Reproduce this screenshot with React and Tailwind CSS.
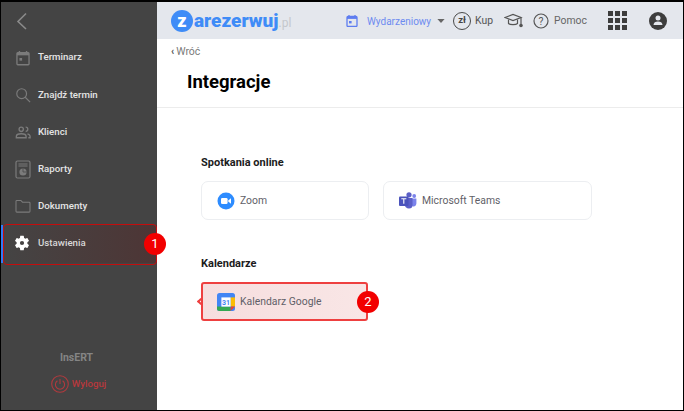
import { Fragment } from 'react';

const menu = [
  { label: 'Terminarz', icon: 'calendar' },
  { label: 'Znajdź termin', icon: 'search' },
  { label: 'Klienci', icon: 'people' },
  { label: 'Raporty', icon: 'report' },
  { label: 'Dokumenty', icon: 'folder' },
];

function MenuIcon({ name }) {
  if (name === 'calendar') {
    return (
      <svg width="16" height="16" viewBox="0 0 18 18" fill="none">
        <path d="M5 1v3M13 1v3" stroke="#7b7b7b" strokeWidth="1.6" />
        <rect x="2.2" y="3" width="13.6" height="13.6" rx="1" stroke="#7b7b7b" strokeWidth="1.5" />
        <rect x="2.2" y="3" width="13.6" height="3" fill="#7b7b7b" />
        <rect x="5" y="9" width="3" height="3" fill="#7b7b7b" />
      </svg>
    );
  }
  if (name === 'search') {
    return (
      <svg width="16" height="16" viewBox="0 0 18 18" fill="none" stroke="#7b7b7b" strokeWidth="1.3">
        <circle cx="7.5" cy="7.5" r="5.5" />
        <path d="M11.5 11.5l5.5 5.5" />
      </svg>
    );
  }
  if (name === 'people') {
    return (
      <svg width="16" height="16" viewBox="0 0 18 18" fill="none" stroke="#7b7b7b" strokeWidth="1.5">
        <circle cx="7" cy="6" r="2.4" />
        <path d="M12 3.6a2.4 2.4 0 0 1 0 4.8" />
        <path d="M1.5 15.5v-1.5c0-2 2.5-3 5.5-3s5.5 1 5.5 3v1.5z" />
        <path d="M14 11c1.6.4 3 1.2 3 3v1.5h-2" />
      </svg>
    );
  }
  if (name === 'report') {
    return (
      <svg width="16" height="19" viewBox="0 0 16 19" fill="none">
        <rect x="1" y="1" width="14" height="17" rx="1.5" stroke="#7b7b7b" strokeWidth="1.2" />
        <path d="M3.5 4h9M3.5 6h9" stroke="#7b7b7b" strokeWidth="1.1" />
        <circle cx="8" cy="12" r="3.6" fill="#7b7b7b" />
        <path d="M8 12V8.4M8 12h3.6" stroke="#444" strokeWidth="0.7" />
      </svg>
    );
  }
  return (
    <svg width="16" height="14" viewBox="0 0 18 16" fill="none" stroke="#7b7b7b" strokeWidth="1.2">
      <path d="M1 14V2.6C1 2 1.4 1.6 2 1.6h4.6l1.8 2H16c.6 0 1 .4 1 1V14c0 .6-.4 1-1 1H2c-.6 0-1-.4-1-1z" />
    </svg>
  );
}

function Gear() {
  return (
    <svg width="18" height="18" viewBox="0 0 24 24" fill="#fff">
      <path d="M19.14 12.94c.04-.3.06-.61.06-.94 0-.32-.02-.64-.07-.94l2.03-1.58a.49.49 0 0 0 .12-.61l-1.92-3.32a.49.49 0 0 0-.59-.22l-2.39.96c-.5-.38-1.03-.7-1.62-.94l-.36-2.54a.48.48 0 0 0-.48-.41h-3.84c-.24 0-.43.17-.47.41l-.36 2.54c-.59.24-1.13.57-1.62.94l-2.39-.96a.49.49 0 0 0-.59.22L2.74 8.87c-.12.21-.08.47.12.61l2.03 1.58c-.05.3-.09.63-.09.94s.02.64.07.94l-2.03 1.58a.49.49 0 0 0-.12.61l1.92 3.32c.12.22.37.29.59.22l2.39-.96c.5.38 1.03.7 1.62.94l.36 2.54c.05.24.24.41.48.41h3.84c.24 0 .44-.17.47-.41l.36-2.54c.59-.24 1.13-.56 1.62-.94l2.39.96c.22.08.47 0 .59-.22l1.92-3.32c.12-.22.07-.47-.12-.61l-2.01-1.58zM12 14.8A2.8 2.8 0 1 1 12 9.2a2.8 2.8 0 0 1 0 5.6z" />
    </svg>
  );
}

function Badge({ n, className }) {
  return (
    <div className={`absolute z-10 w-[22px] h-[22px] rounded-full bg-[#f20000] text-white text-[13px] flex items-center justify-center ${className}`}>
      {n}
    </div>
  );
}

function Sidebar() {
  return (
    <aside className="relative z-10 w-[156px] shrink-0 bg-[#444444] flex flex-col">
      <div className="h-[37px] pl-[15px] pt-[10px]">
        <svg width="12" height="18" viewBox="0 0 12 18" fill="none" stroke="#8a8a8a" strokeWidth="1.6">
          <path d="M10 1.5L2 9.5l8 7.5" />
        </svg>
      </div>
      {menu.map((item) => (
        <div key={item.label} className="h-[37.2px] flex items-center">
          <div className="w-[37px] pl-[14px] flex items-center">
            <MenuIcon name={item.icon} />
          </div>
          <span className="text-[9.7px] font-medium text-[#e4e4e4]">{item.label}</span>
        </div>
      ))}
      <div className="h-[38px] flex items-center border-l-2 border-[#2f7bf5] bg-gradient-to-r from-[#444444] to-[#4d3535] pb-[2px]">
        <div className="w-[35px] pl-[10px] flex items-center">
          <Gear />
        </div>
        <span className="text-[9.7px] font-medium text-[#d8d8d8]">Ustawienia</span>
      </div>
      <div className="mt-auto pb-[17px] flex flex-col items-center">
        <span className="text-[10.5px] font-bold text-[#858585] mb-[9px] mr-[5px]">InsERT</span>
        <div className="flex items-center gap-[3px] mr-[1px]">
          <svg width="18" height="18" viewBox="0 0 18 18" fill="none" stroke="#b03a3e" strokeWidth="1.1">
            <circle cx="9" cy="9" r="8.3" />
            <path d="M6.4 5.8a4.6 4.6 0 1 0 5.2 0M9 4v5" />
          </svg>
          <span className="text-[9.7px] font-medium text-[#b8383c]">Wyloguj</span>
        </div>
      </div>
      <div className="absolute left-[2px] top-[222px] w-[154px] h-[41px] rounded-[4px] border border-[#c50d0d]" />
      <Badge n="1" className="left-[143px] top-[231px]" />
    </aside>
  );
}

function Topbar() {
  return (
    <header className="h-[37px] shrink-0 bg-[#e4e7ed] flex items-center pl-[14px]">
      <div className="flex items-center w-[173px]">
        <div className="w-[22px] h-[22px] rounded-full bg-[#3f8cf7] flex items-center justify-center text-white text-[18px] font-black leading-none">z</div>
        <span className="text-[#3f8cf7] text-[19px] font-black leading-none ml-[1px]">arezerwuj</span>
        <span className="text-[#c4c7cc] text-[12px] leading-none mt-[4px]">.pl</span>
      </div>
      <svg className="ml-[2px]" width="12" height="12" viewBox="0 0 12 12" fill="none">
        <path d="M3 0v2M9 0v2" stroke="#5e7df0" strokeWidth="1.2" />
        <rect x="1" y="1.5" width="10" height="10" rx="1" stroke="#5e7df0" strokeWidth="1.3" />
        <rect x="1" y="1.5" width="10" height="2.4" fill="#5e7df0" />
        <rect x="3" y="6" width="2.6" height="2.4" fill="#5e7df0" />
      </svg>
      <span className="ml-[9px] text-[10px] text-[#6d8bf0] mt-[1px]">Wydarzeniowy</span>
      <svg className="ml-[6px]" width="8" height="4" viewBox="0 0 9 5" fill="#666">
        <path d="M0 0h9L4.5 5z" />
      </svg>
      <div className="ml-[8px] w-[18px] h-[18px] rounded-full border-[1.5px] border-[#4a4a4a] flex items-center justify-center text-[9.5px] font-bold text-[#444]">zł</div>
      <span className="ml-[4px] text-[10.4px] text-[#555] mt-[1px]">Kup</span>
      <svg className="ml-[11px]" width="19" height="16" viewBox="0 0 19 16" fill="none" stroke="#555" strokeWidth="1.2">
        <path d="M1 4.5L9 1.5l8 3-8 3z" />
        <path d="M4.5 6.5v4c1.5 1.5 7.5 1.5 9 0v-4" />
        <path d="M17 5v6" />
        <circle cx="17" cy="12.5" r="1.2" fill="#555" />
      </svg>
      <svg className="ml-[10px]" width="16" height="16" viewBox="0 0 16 16" fill="none">
        <circle cx="8" cy="8" r="7" stroke="#555" strokeWidth="1.2" />
        <text x="8" y="11.6" textAnchor="middle" fontSize="10.5" fill="#555" fontFamily="Roboto, sans-serif">?</text>
      </svg>
      <span className="ml-[5px] text-[10.4px] text-[#666]">Pomoc</span>
      <div className="ml-[21px] grid grid-cols-3 gap-[2px]">
        {[0, 1, 2, 3, 4, 5, 6, 7, 8].map((i) => (
          <div key={i} className="w-[5px] h-[5px] bg-[#3d3d3d]" />
        ))}
      </div>
      <div className="ml-[22px] w-[18px] h-[18px] rounded-full bg-[#3d3d3d] flex items-center justify-center">
        <svg width="10" height="11" viewBox="0 0 10 11" fill="#e4e7ed">
          <circle cx="5" cy="3" r="2.5" />
          <path d="M0.5 10c0-2.5 2-3.5 4.5-3.5s4.5 1 4.5 3.5z" />
        </svg>
      </div>
    </header>
  );
}

function Card({ icon, label, className = '' }) {
  return (
    <div className={`h-[39px] rounded-[7px] border border-[#eceef1] flex items-center pl-[15px] gap-[5px] ${className}`}>
      {icon}
      <span className="text-[10.4px] text-[#5f5f68] mt-[1px]">{label}</span>
    </div>
  );
}

const zoomIcon = (
  <svg width="18" height="18" viewBox="0 0 18 18">
    <circle cx="9" cy="9" r="8.5" fill="#2d8cff" />
    <rect x="4" y="6" width="6.6" height="6" rx="1.3" fill="#fff" />
    <path d="M11.2 8.4l2.8-2.1v5.4l-2.8-2.1z" fill="#fff" />
  </svg>
);

const teamsIcon = (
  <svg width="18" height="17" viewBox="0 0 18 17">
    <circle cx="10" cy="2.8" r="2.6" fill="#5b5fc7" />
    <circle cx="15.2" cy="4" r="1.9" fill="#7b83eb" />
    <path d="M12 6.5h5.4v5a3 3 0 0 1-5 2.2z" fill="#7b83eb" />
    <path d="M5.5 6h8v7a3.5 3.5 0 0 1-3.5 3.5A4.5 4.5 0 0 1 5.5 12z" fill="#5b5fc7" />
    <rect x="0" y="4.5" width="9.5" height="9.5" rx="1" fill="#4b53bc" />
    <path d="M2.3 6.8h5M4.8 6.8v5" stroke="#fff" strokeWidth="1.1" />
  </svg>
);

const googleIcon = (
  <svg width="18" height="18" viewBox="0 0 18 18">
    <rect x="0" y="0" width="18" height="18" rx="2.5" fill="#4285f4" />
    <rect x="13.6" y="4.4" width="4.4" height="9.2" fill="#fbbc04" />
    <path d="M0 13.6h13.6V18H2.5A2.5 2.5 0 0 1 0 15.5z" fill="#34a853" />
    <path d="M13.6 13.6H18L13.6 18z" fill="#ea4335" />
    <rect x="4.4" y="4.4" width="9.2" height="9.2" fill="#fff" />
    <text x="9" y="12.2" textAnchor="middle" fontSize="7" fontWeight="700" fill="#4285f4" fontFamily="Roboto, sans-serif">31</text>
  </svg>
);

function Content() {
  return (
    <main className="relative flex-1 flex flex-col bg-white">
      <Topbar />
      <div className="h-[69px] shrink-0 border-b border-[#ececec] pl-[14px] pt-[6px]">
        <div className="flex items-center gap-[2px] text-[10.5px] leading-[14px] text-[#7a7a7a]">
          <span className="text-[#555] text-[10px] font-black">‹</span>
          <span>Wróć</span>
        </div>
        <h1 className="mt-[11px] ml-[16px] text-[18.5px] leading-[24px] font-bold text-black">Integracje</h1>
      </div>
      <div className="pl-[44px] pt-[47px]">
        <h2 className="text-[11px] leading-[15px] font-bold text-[#1c1c1c]">Spotkania online</h2>
        <div className="mt-[11px] flex gap-[14px]">
          <Card icon={zoomIcon} label="Zoom" className="w-[168px]" />
          <Card icon={teamsIcon} label="Microsoft Teams" className="w-[209px]" />
        </div>
        <h2 className="mt-[36px] text-[11px] leading-[15px] font-bold text-[#1c1c1c]">Kalendarze</h2>
        <div className="mt-[11px] flex">
          <div className="relative w-[167px] h-[39px] rounded-[3px] border-2 border-[#ee4040] bg-gradient-to-r from-[#f6dede] to-[#f9e6e6] flex items-center pl-[14px] gap-[5px]">
            {googleIcon}
            <span className="text-[10.4px] text-[#5f5f68] mt-[1px]">Kalendarz Google</span>
            <div className="absolute left-[-5px] top-[15px] w-[5px] h-[5px] rotate-45 border-l-2 border-b-2 border-[#ee4040]" />
            <Badge n="2" className="left-[154px] top-[7px]" />
          </div>
        </div>
      </div>
    </main>
  );
}

export default function App() {
  return (
    <Fragment>
      <div className="w-[684px] h-[411px] flex overflow-hidden bg-white border-t-2 border-l border-r border-b border-black font-['Roboto',sans-serif]">
        <Sidebar />
        <Content />
      </div>
    </Fragment>
  );
}
